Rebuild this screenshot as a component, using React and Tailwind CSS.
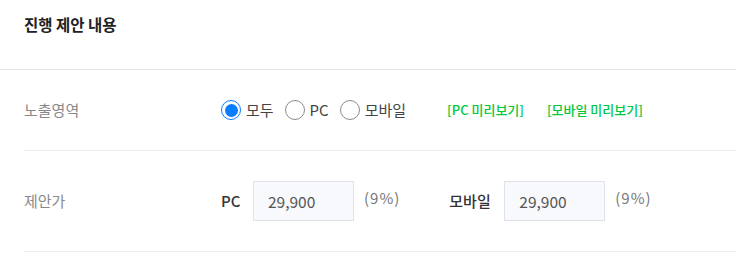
import React, { useState } from "react";

const font = { fontFamily: '"Noto Sans CJK KR", "Noto Sans", sans-serif' };

const Radio = ({ checked, label, onClick }) => (
  <label className="flex items-center cursor-pointer" onClick={onClick}>
    <span
      className={
        "flex items-center justify-center w-[20px] h-[20px] rounded-full border-[1.5px] bg-white " +
        (checked ? "border-[#0a7cff]" : "border-[#8a8a8a]")
      }
    >
      {checked && <span className="w-[13px] h-[13px] rounded-full bg-[#0a7cff]" />}
    </span>
    <span className="ml-[5px] text-[15px] text-[#444]">{label}</span>
  </label>
);

const PriceInput = ({ value }) => (
  <input
    readOnly
    value={value}
    className="w-[101px] h-[40px] px-[14px] bg-[#f8f9fc] border border-[#dfe2e8] text-[15.5px] text-[#555] outline-none"
  />
);

export default function App() {
  const [area, setArea] = useState("all");

  return (
    <div className="w-[736px] h-[256px] bg-white overflow-hidden" style={font}>
      <div className="h-[70px] pl-[24px] pt-[13px] border-b border-[#e5e5e5]">
        <h2 className="text-[15.5px] font-bold text-[#222]">진행 제안 내용</h2>
      </div>

      <div className="ml-[24px]">
        <div className="flex items-center h-[81px] border-b border-[#eeeeee]">
          <div className="w-[197px] text-[15px] text-[#888]">노출영역</div>
          <div className="flex items-center gap-[11px]">
            <Radio checked={area === "all"} label="모두" onClick={() => setArea("all")} />
            <Radio checked={area === "pc"} label="PC" onClick={() => setArea("pc")} />
            <Radio checked={area === "mobile"} label="모바일" onClick={() => setArea("mobile")} />
          </div>
          <a className="ml-[41px] text-[13px] font-medium text-[#00c73c]" href="#">
            [PC 미리보기]
          </a>
          <a className="ml-[23px] text-[13px] font-medium text-[#00c73c]" href="#">
            [모바일 미리보기]
          </a>
        </div>

        <div className="flex items-center h-[101px] border-b border-[#eeeeee]">
          <div className="w-[197px] text-[15px] text-[#888]">제안가</div>
          <span className="w-[32px] text-[15px] font-medium text-[#333]">PC</span>
          <PriceInput value="29,900" />
          <span className="ml-[10px] mb-[6px] text-[15px] tracking-[1px] text-[#777]">(9%)</span>
          <span className="ml-[49px] w-[55px] text-[15px] font-medium text-[#333]">모바일</span>
          <PriceInput value="29,900" />
          <span className="ml-[10px] mb-[6px] text-[15px] tracking-[1px] text-[#777]">(9%)</span>
        </div>
      </div>
    </div>
  );
}
